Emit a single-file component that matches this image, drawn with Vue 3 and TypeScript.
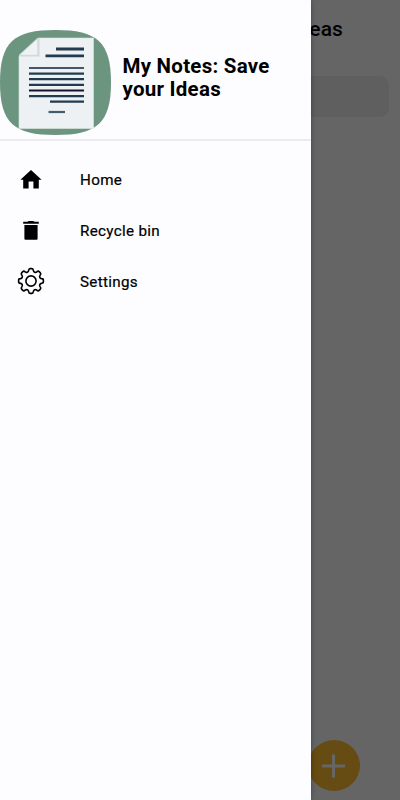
<script setup lang="ts">
type IconName = 'home' | 'trash' | 'gear'

interface MenuEntry {
  label: string
  icon: IconName
}

const entries: MenuEntry[] = [
  { label: 'Home', icon: 'home' },
  { label: 'Recycle bin', icon: 'trash' },
  { label: 'Settings', icon: 'gear' },
]

// Closed outline of an eight-toothed cog centred on (14, 14).
function cogOutline(): string {
  const at = (radius: number, degrees: number): string => {
    const a = (degrees * Math.PI) / 180
    return `${(14 + radius * Math.cos(a)).toFixed(2)} ${(14 + radius * Math.sin(a)).toFixed(2)}`
  }
  let d = ''
  for (let i = 0; i < 8; i++) {
    const c = i * 45 - 90
    d += `${i === 0 ? 'M' : 'L'}${at(10.8, c - 12.5)}`
    d += `Q${at(12.6, c - 10.5)} ${at(12.4, c - 4)}`
    d += `L${at(12.4, c + 4)}`
    d += `Q${at(12.6, c + 10.5)} ${at(10.8, c + 12.5)}`
    d += `C${at(9.2, c + 16)} ${at(9.2, c + 29)} ${at(10.8, c + 32.5)}`
  }
  return d + 'Z'
}

const cogPath = cogOutline()
</script>

<template>
  <div class="screen">
    <main class="page">
      <h1 class="page-title">My Notes: Save your Ideas</h1>
      <div class="search"></div>
      <button class="fab" aria-label="Add note">
        <svg viewBox="0 0 24 24" width="24" height="24"><path d="M11.5 0.5V23.5M0 12H23" /></svg>
      </button>
    </main>
    <div class="scrim"></div>
    <aside class="drawer">
      <header class="brand">
        <svg class="logo" viewBox="0 0 111 105" width="111" height="105">
          <path fill="#6c9580" d="M0 52.5C0 12 14 0 55.5 0S111 12 111 52.5S97 105 55.5 105S0 93 0 52.5Z" />
          <path fill="#edf1f3" stroke="#dce6e3" stroke-width=".6" d="M38 8H93.5V98.5H19V26Z" />
          <path fill="#d3dadd" d="M37.5 8H39.5V26.5H19V24.8Z" />
          <path fill="#eff3f5" d="M37.2 9.5V24.7H20.5Z" />
          <g stroke="#233b4e" stroke-width="2.2">
            <path stroke-width="2.8" d="M56 19H84M45.5 25.8H84" />
            <path stroke="#46566a" d="M29 38H84" />
            <path d="M29 43.6H84M29 49.2H84M29 54.8H84M29 66.2H84M50 71.7H84" />
            <path stroke="#15152f" d="M29 60.5H84" />
            <path stroke="#435c6c" d="M48.5 82H65" />
          </g>
        </svg>
        <h2 class="brand-name">My Notes: Save your Ideas</h2>
      </header>
      <nav class="menu">
        <a v-for="entry in entries" :key="entry.label" class="entry">
          <svg class="icon" viewBox="0 0 28 28" width="28" height="28">
            <path v-if="entry.icon === 'home'" d="M14 4L24.6 13.8H21.8V22.4H16.4V15.6H11.6V22.4H6.2V13.8H3.4Z" />
            <path v-else-if="entry.icon === 'trash'" d="M6.2 4.8H10.6L11.6 3.9H16.4L17.4 4.8H21.8V6.8H6.2ZM7.4 8H20.6V21.8Q20.6 22.8 19.6 22.8H8.4Q7.4 22.8 7.4 21.8Z" />
            <g v-else class="cog">
              <path :d="cogPath" />
              <circle cx="14" cy="14" r="5.1" />
            </g>
          </svg>
          <span class="label">{{ entry.label }}</span>
        </a>
      </nav>
    </aside>
  </div>
</template>

<style>
body {
  margin: 0;
}
</style>

<style scoped>
.screen {
  position: relative;
  width: 400px;
  height: 800px;
  overflow: hidden;
  background: #fdfdff;
  font-family: Roboto, sans-serif;
  color: #000;
}

.page {
  box-sizing: border-box;
  height: 100%;
  padding: 16px 11px 9px;
  display: flex;
  flex-direction: column;
}

.page-title {
  margin: 0 46px 34px 0;
  font-size: 21px;
  font-weight: 500;
  line-height: 26px;
  text-align: right;
  letter-spacing: 0.1px;
}

.search {
  height: 41px;
  border-radius: 9px;
  background: #ededed;
}

.fab {
  margin: auto 29px 0 auto;
  width: 52px;
  height: 51px;
  padding: 0;
  border: 0;
  border-radius: 50%;
  background: #ffbb30;
  display: grid;
  place-items: center;
}

.fab path {
  stroke: #fff;
  stroke-width: 3;
}

.scrim {
  position: absolute;
  inset: 0;
  background: rgba(0, 0, 0, 0.6);
}

.drawer {
  position: absolute;
  inset: 0 auto 0 0;
  width: 311px;
  background: #fdfdff;
  box-shadow: 0 0 5px rgba(0, 0, 0, 0.35);
}

.brand {
  box-sizing: border-box;
  height: 141px;
  padding-top: 30px;
  display: flex;
  align-items: flex-start;
  gap: 11.5px;
  border-bottom: 2px solid #ebebed;
}

.logo {
  flex: none;
}

.brand-name {
  margin: 25px 0 0;
  width: 165px;
  font-size: 20.5px;
  font-weight: 700;
  line-height: 23px;
  letter-spacing: 0.25px;
}

.menu {
  padding-top: 14px;
}

.entry {
  height: 50.6px;
  padding-left: 17px;
  display: flex;
  align-items: center;
  gap: 35px;
}

.icon {
  flex: none;
}

.cog {
  fill: none;
  stroke: #000;
  stroke-width: 1.6;
  stroke-linejoin: round;
}

.label {
  padding-top: 0.3px;
  font-size: 15.2px;
  font-weight: 400;
  line-height: 20px;
  letter-spacing: 0.32px;
  -webkit-text-stroke: 0.2px #000;
}
</style>
